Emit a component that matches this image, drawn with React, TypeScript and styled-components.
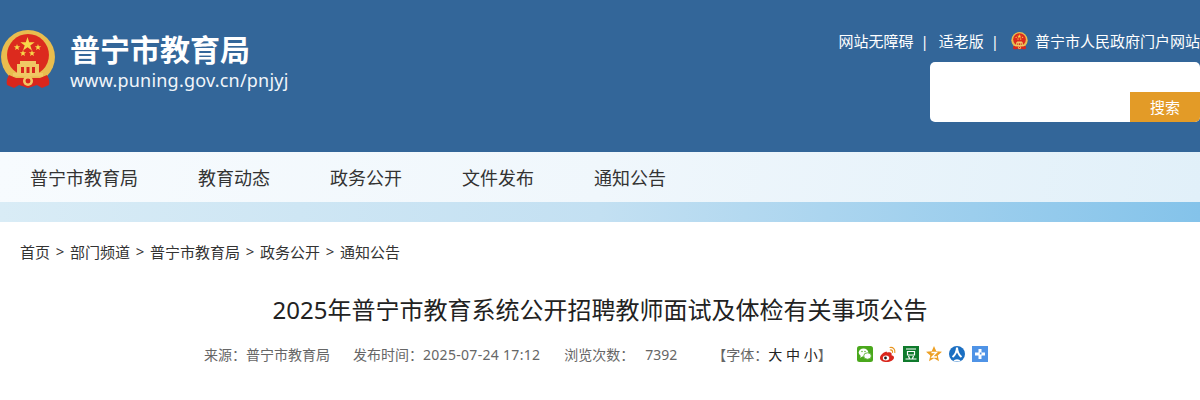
import React from 'react';
import styled, { createGlobalStyle } from 'styled-components';

const GlobalStyle = createGlobalStyle`
  html, body {
    margin: 0;
    padding: 0;
    background: #fff;
    overflow: hidden;
    font-family: "Noto Sans", "Noto Sans CJK SC", sans-serif;
  }
`;

const Emblem: React.FC<{ size: number }> = ({ size }) => (
  <svg width={size} height={size * 1.07} viewBox="0 0 56 60">
    <circle cx="28" cy="27" r="27" fill="#e9bd4e" />
    <circle cx="28" cy="25" r="21" fill="#dc2a1e" />
    <path d="M9 45c-2 3-3 7-2 10l7 3 5-3 9 3 9-3 5 3 7-3c1-3 0-7-2-10l-7 3H16z" fill="#d9261c" />
    <path d="M20 31h16v3H20zM17 34h22v9H17zM13 43h30v3.500H13z" fill="#f0c864" />
    <path d="M21 37h3v6h-3zM26.500 37h3v6h-3zM32 37h3v6h-3z" fill="#d9261c" />
    <circle cx="28" cy="51" r="5" fill="#f0c864" />
    <circle cx="28" cy="51" r="2.500" fill="#d9261c" />
    <path d="M27.500 7l1.700 5.200h5.500l-4.400 3.200 1.700 5.200-4.500-3.200-4.500 3.200 1.700-5.200-4.400-3.200h5.500z" fill="#f8d94a" />
    <path d="M17 14l.8 2.300h2.400l-1.900 1.500.7 2.300-2-1.400-2 1.400.7-2.300-1.900-1.500h2.400zM38 14l.8 2.300h2.400l-1.900 1.500.7 2.300-2-1.400-2 1.400.7-2.300-1.900-1.500h2.400zM23 20l.8 2.300h2.400l-1.900 1.500.7 2.300-2-1.400-2 1.400.7-2.300-1.900-1.500h2.400zM32 20l.8 2.300h2.400l-1.900 1.500.7 2.300-2-1.400-2 1.400.7-2.300-1.900-1.500h2.400z" fill="#f8d94a" />
  </svg>
);

const Page = styled.div`
  width: 1200px;
  height: 400px;
  overflow: hidden;
`;

const Header = styled.header`
  height: 152px;
  background: #336699;
  display: flex;
  justify-content: space-between;
  box-sizing: border-box;
  color: #fff;
`;

const Brand = styled.div`
  display: flex;
  align-items: flex-start;
  gap: 14px;
  padding-top: 30px;
`;

const BrandText = styled.div`
  display: flex;
  flex-direction: column;
`;

const BrandName = styled.div`
  font-size: 30px;
  font-weight: 700;
  line-height: 40px;
`;

const BrandUrl = styled.div`
  font-size: 18px;
  line-height: 20px;
  letter-spacing: 0.22px;
  color: #f0f5fa;
`;

const Tools = styled.div`
  width: 362px;
  padding-top: 30px;
  display: flex;
  flex-direction: column;
  align-items: flex-end;
`;

const ToolLinks = styled.div`
  display: flex;
  align-items: center;
  font-size: 15px;
  line-height: 22px;
  white-space: nowrap;
`;

const Divider = styled.span`
  margin: 0 10px 0 7px;
`;

const PortalLink = styled.span`
  display: flex;
  align-items: center;
  gap: 7px;
  margin-left: 2px;
`;

const SearchBox = styled.div`
  margin-top: 10px;
  width: 270px;
  height: 60px;
  background: #fff;
  border-radius: 5px;
  display: flex;
  align-items: flex-end;
  justify-content: flex-end;
  overflow: hidden;
`;

const SearchButton = styled.div`
  width: 70px;
  height: 30px;
  background: #e39b27;
  color: #fff;
  font-size: 15px;
  line-height: 30px;
  text-align: center;
`;

const Nav = styled.nav`
  height: 50px;
  padding-left: 30px;
  display: flex;
  gap: 60px;
  align-items: center;
  font-size: 18px;
  color: #333;
  background: linear-gradient(100deg, #f7fbfe 0%, #f0f7fc 50%, #e1f0f9 100%);
`;

const Strip = styled.div`
  height: 20px;
  background: linear-gradient(90deg, #d9ecf6 0%, #c3e0f2 50%, #84c3ea 100%);
`;

const Crumbs = styled.div`
  margin-top: 18px;
  padding-left: 20px;
  height: 22px;
  display: flex;
  gap: 5px;
  align-items: center;
  font-size: 15px;
  color: #333;
`;

const CrumbSep = styled.span`
  width: 10px;
  text-align: center;
`;

const Title = styled.h1`
  margin: 31px 0 0;
  font-size: 24px;
  font-weight: 400;
  line-height: 34px;
  color: #222;
  text-align: center;
`;

const Meta = styled.div`
  margin-top: 16px;
  padding-left: 204px;
  display: flex;
  align-items: center;
  height: 22px;
  font-size: 14px;
  color: #666;
  white-space: nowrap;
`;

const MetaItem = styled.span<{ $gap: number }>`
  margin-right: ${p => p.$gap}px;
`;

const DateText = styled.span`
  letter-spacing: 0.3px;
`;

const FontSizes = styled.span`
  color: #222;
`;

const Shares = styled.div`
  display: flex;
  gap: 5px;
  margin-left: 24px;
`;

const ShareIcon = styled.svg`
  width: 18px;
  height: 18px;
  display: block;
`;

const crumbs = ['首页', '部门频道', '普宁市教育局', '政务公开', '通知公告'];

const App: React.FC = () => {
  return (
    <Page>
      <GlobalStyle />
      <Header>
        <Brand>
          <Emblem size={56} />
          <BrandText>
            <BrandName>普宁市教育局</BrandName>
            <BrandUrl>www.puning.gov.cn/pnjyj</BrandUrl>
          </BrandText>
        </Brand>
        <Tools>
          <ToolLinks>
            网站无障碍<Divider>|</Divider>适老版<Divider>|</Divider>
            <PortalLink>
              <Emblem size={17} />
              普宁市人民政府门户网站
            </PortalLink>
          </ToolLinks>
          <SearchBox>
            <SearchButton>搜索</SearchButton>
          </SearchBox>
        </Tools>
      </Header>
      <Nav>
        <span>普宁市教育局</span>
        <span>教育动态</span>
        <span>政务公开</span>
        <span>文件发布</span>
        <span>通知公告</span>
      </Nav>
      <Strip />
      <Crumbs>
        {crumbs.map((c, i) => (
          <React.Fragment key={c}>
            {i > 0 && <CrumbSep>&gt;</CrumbSep>}
            <span>{c}</span>
          </React.Fragment>
        ))}
      </Crumbs>
      <Title>2025年普宁市教育系统公开招聘教师面试及体检有关事项公告</Title>
      <Meta>
        <MetaItem $gap={23}>来源：普宁市教育局</MetaItem>
        <MetaItem $gap={24}>发布时间：<DateText>2025-07-24 17:12</DateText></MetaItem>
        <MetaItem $gap={11}>浏览次数：</MetaItem>
        <MetaItem $gap={35}>7392</MetaItem>
        <span>【字体：<FontSizes>大 中 小</FontSizes>】</span>
        <Shares>
          <ShareIcon viewBox="0 0 18 18">
            <rect x="1" y="1" width="16" height="16" rx="2.500" fill="#4aa81c" />
            <ellipse cx="7.500" cy="7.500" rx="4.800" ry="4" fill="#fff" />
            <path d="M5 10.500l-1 2.300 2.600-1.300z" fill="#fff" />
            <ellipse cx="11.500" cy="11" rx="3.800" ry="3.200" fill="#fff" stroke="#4aa81c" strokeWidth="0.8" />
            <circle cx="6" cy="6.500" r="0.700" fill="#4aa81c" />
            <circle cx="9" cy="6.500" r="0.700" fill="#4aa81c" />
          </ShareIcon>
          <ShareIcon viewBox="0 0 18 18">
            <path d="M7.500 6.500C4 7.500 1 10.500 1 13c0 2.500 3 4 6.500 4 4 0 7.500-2 7.500-4.500 0-1.500-1.500-2-2.500-2.300.6-1.700-.2-3-2-3-.8 0-1.500.1-2.500.3z" fill="#d9261c" />
            <ellipse cx="7" cy="13" rx="3.200" ry="2.500" fill="#fff" />
            <circle cx="6.500" cy="13" r="1.400" fill="#222" />
            <path d="M11 2.500c3-.6 5.500 2 4.800 5M11.300 5c1.500-.3 2.500.9 2.200 2.300" stroke="#e8951f" strokeWidth="1.200" fill="none" strokeLinecap="round" />
          </ShareIcon>
          <ShareIcon viewBox="0 0 18 18">
            <rect x="1" y="1" width="16" height="16" fill="#0f7a2c" />
            <path d="M4 4h10M5.500 6.500h7v3.500h-7zM6.500 11l1 2.500M11.500 11l-1 2.500M3.500 14h11" stroke="#fff" strokeWidth="1.200" fill="none" />
          </ShareIcon>
          <ShareIcon viewBox="0 0 18 18">
            <path d="M9 1l2.300 5.300 5.700.5-4.300 3.800 1.300 5.700L9 13.300l-5 3 1.300-5.700L1 6.800l5.700-.5z" fill="#eda024" />
            <path d="M6.500 7.500h5l-4.500 4.500h5" stroke="#fff" strokeWidth="1.300" fill="none" />
          </ShareIcon>
          <ShareIcon viewBox="0 0 18 18">
            <circle cx="9" cy="9" r="8" fill="#1b6fc2" />
            <path d="M9 2.500c-.2 4-2 7.500-4.500 9.500M9 2.500c.2 4 2 7.500 4.500 9.500" stroke="#fff" strokeWidth="2" fill="none" />
            <path d="M5 16.500c2-3 6-3 8 0" fill="#fff" />
          </ShareIcon>
          <ShareIcon viewBox="0 0 18 18">
            <rect x="1" y="1" width="16" height="16" fill="#4f93e6" />
            <path d="M7.500 4h3v3.500H14v3h-3.500V14h-3v-3.500H4v-3h3.500z" fill="#fff" />
            <path d="M8.800 7.500h1.700v2H8.800z" fill="#4f93e6" />
          </ShareIcon>
        </Shares>
      </Meta>
    </Page>
  );
};

export default App;
